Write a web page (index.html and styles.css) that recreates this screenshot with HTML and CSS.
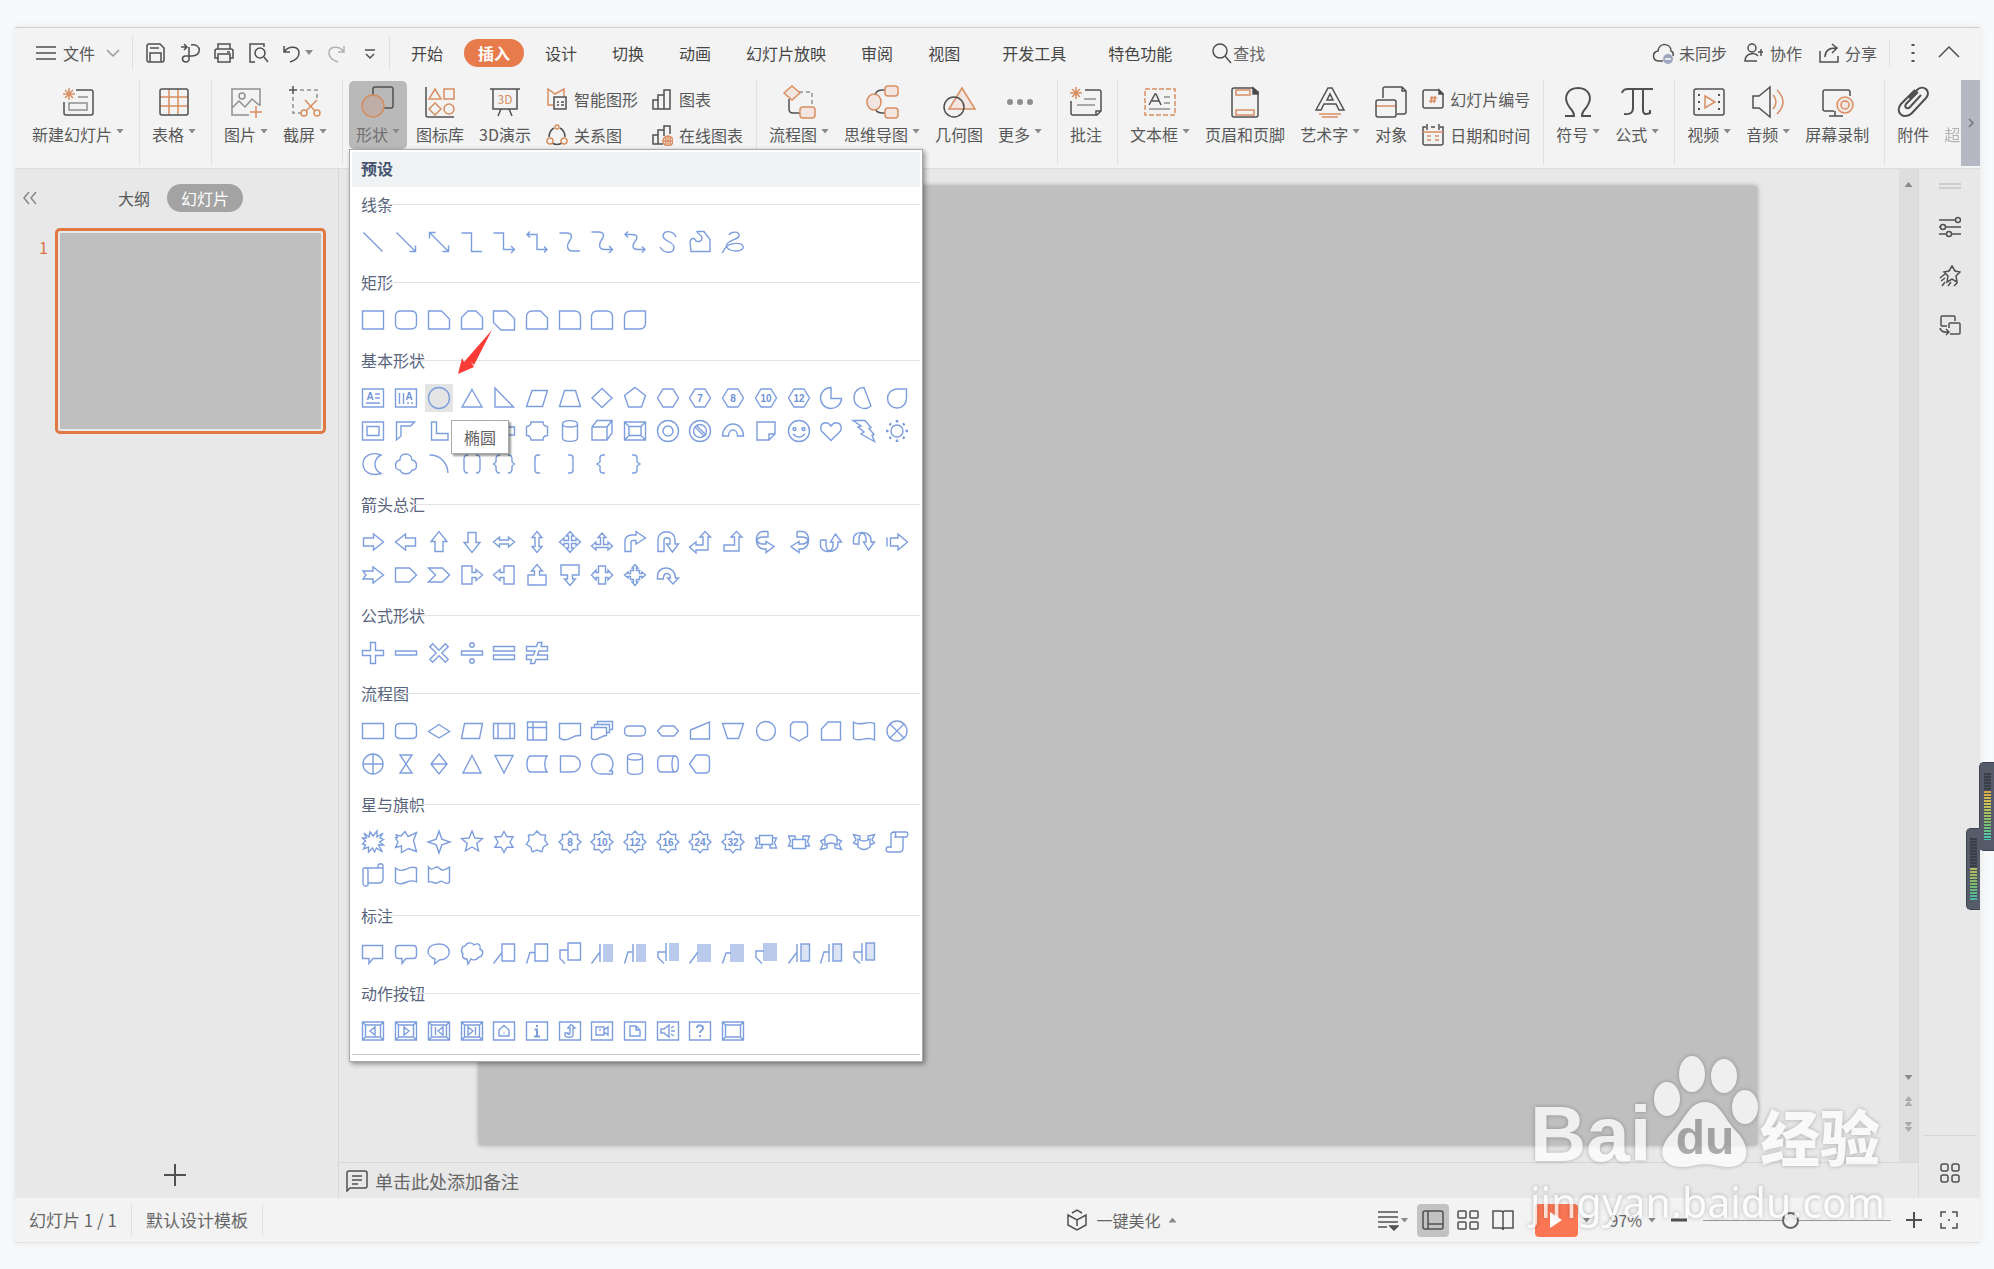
FILE: index.html
```html
<!DOCTYPE html>
<html lang="zh-CN">
<head>
<meta charset="utf-8">
<title>演示</title>
<link rel="stylesheet" href="styles.css">
</head>
<body>
<div class="app">
  <header class="menubar">
    <button class="file-btn"><svg class="i22" viewBox="0 0 22 22"><path d="M1 5h20M1 11h20M1 17h20"/></svg>文件<svg class="chev" viewBox="0 0 14 10"><path d="M1 2l6 6 6-6"/></svg></button>
    <div class="quick">
      <button aria-label="保存"><svg class="i22" viewBox="0 0 22 22"><path d="M2 4q0-2 2-2h11l4 4v12q0 2-2 2H4q-2 0-2-2zM5 20v-9h11v9M5 6h9"/></svg></button>
      <button aria-label="输出"><svg class="i22" viewBox="0 0 22 22"><path d="M2 5h5M5 2l3 3-3 3M12 3c11-2 11 12 0 11H6c-4 1-3 6 1 6s3-4 3-6V5"/></svg></button>
      <button aria-label="打印"><svg class="i22" viewBox="0 0 22 22"><path d="M5 7V2h12v5M5 16H2V9q0-2 2-2h14q2 0 2 2v7h-3M5 12h12v8H5zM14 10h3"/></svg></button>
      <button aria-label="预览"><svg class="i22" viewBox="0 0 22 22"><path d="M8 20H3V2h14v3"/><circle cx="13" cy="11" r="5"/><path d="M17 15l4 5"/></svg></button>
      <button aria-label="撤销" class="drop"><svg class="i22" viewBox="0 0 22 22"><path d="M3 4v6h6M3 10C8 3 18 4 18 11q0 6-9 9"/></svg><i class="caret"></i></button>
      <button aria-label="重做" class="dim"><svg class="i22" viewBox="0 0 22 22"><path d="M19 4v6h-6M19 10C14 3 4 4 4 11q0 6 9 9"/></svg></button>
      <button aria-label="更多"><svg class="i22" viewBox="0 0 22 22"><path d="M6 8h10M7 12l4 4 4-4"/></svg></button>
    </div>
    <nav class="tabs">
      <button>开始</button><button class="on">插入</button><button>设计</button><button>切换</button><button>动画</button><button>幻灯片放映</button><button>审阅</button><button>视图</button><button class="apart">开发工具</button><button class="apart">特色功能</button>
      <button class="find"><svg class="i22" viewBox="0 0 22 22"><circle cx="9" cy="9" r="7"/><path d="M14 14l6 7"/></svg>查找</button>
    </nav>
    <div class="account">
      <button><svg class="i22" viewBox="0 0 22 22"><path d="M11 19H6c-6-1-6-9 0-10 1-9 13-8 13 0q3 1 2 5"/><circle cx="16" cy="17" r="5" fill="#9ea6bd" stroke="none"/><path d="M13 17h6" stroke="#fff"/></svg>未同步</button>
      <button><svg class="i22" viewBox="0 0 22 22"><circle cx="9" cy="6" r="4"/><path d="M15 14c-3-4-13-3-13 5h12M15 10h5M18 7v7"/></svg>协作</button>
      <button><svg class="i22" viewBox="0 0 22 22"><path d="M2 9v11h18v-6M7 15c0-6 4-9 11-9M14 2l5 4-5 5"/></svg>分享</button>
    </div>
    <div class="winctl">
      <button aria-label="选项"><svg class="i22" viewBox="0 0 22 22"><path d="M11 2v2M11 10v2M11 18v2" stroke-width="3"/></svg></button>
      <button aria-label="收起"><svg class="i22" viewBox="0 0 22 22"><path d="M1 15l10-10 10 10"/></svg></button>
    </div>
  </header>

  <div class="ribbon">
    <div class="group first">
      <button class="tool"><svg class="i32" viewBox="0 0 32 32"><path d="M14 4h15q2 0 2 2v21q0 2-2 2H4q-2 0-2-2V16"/><path class="g" d="M16 11h10M7 17h18v7H7z"/><path class="o" d="M7 2v12M1 8h12M3 4l8 8M11 4l-8 8"/></svg><span>新建幻灯片<i class="caret"></i></span></button>
    </div>
    <div class="group">
      <button class="tool"><svg class="i32" viewBox="0 0 32 32"><path class="o" d="M2 11h28M2 20h28M11 3v26M20 3v26"/><rect x="2" y="3" width="28" height="26" rx="2"/></svg><span>表格<i class="caret"></i></span></button>
    </div>
    <div class="group">
      <button class="tool"><svg class="i32" viewBox="0 0 32 32"><path class="g" d="M19 29H2V3h28v17M2 22l7-7 6 6 7-8 7 6"/><circle class="g" cx="12" cy="10" r="3"/><path class="o" d="M26 20v12M20 26h12"/></svg><span>图片<i class="caret"></i></span></button>
      <button class="tool"><svg class="i32" viewBox="0 0 32 32"><path d="M4 0v8M0 4h8"/><path class="g" stroke-dasharray="4 3" d="M11 4h17v10M4 11v16h8"/><path class="o" d="M16 14l10 11M28 14L17 25"/><circle class="o" cx="15" cy="27" r="3"/><circle class="o" cx="28" cy="27" r="3"/></svg><span>截屏<i class="caret"></i></span></button>
    </div>
    <div class="group">
      <div class="menu-anchor">
        <button class="tool open" aria-expanded="true"><svg class="i32" viewBox="0 0 32 32"><rect x="11" y="1" width="20" height="21" rx="2"/><circle cx="11" cy="20" r="11" fill="#bfaea6" stroke="#d38c5f"/></svg><span>形状<i class="caret"></i></span></button>
        <div class="gallery">
          <h2>预设</h2>
          <div class="gallery-body"></div>
          <div class="gallery-end"></div>
          <div class="tip" role="tooltip">椭圆</div>
          <svg class="pointer" viewBox="0 0 36 46"><path d="M35 1L17 36l-3-3 3 5-16 7 4-16 2 4z" fill="#fb3b35" stroke="none"/></svg>
        </div>
      </div>
      <button class="tool"><svg class="i32" viewBox="0 0 32 32"><path d="M2 1v28q0 2 2 2h26"/><path class="o" d="M11 3l6 10H5zM20 3h10v10H20zM11 17l6 6-6 6-6-6z"/><circle class="o" cx="25" cy="23" r="5"/></svg><span>图标库</span></button>
      <button class="tool"><svg class="i32" viewBox="0 0 32 32"><path d="M1 3h30M4 3v20h24V3M12 23l-3 7M20 23l3 7"/><text class="ic" x="16" y="18" font-size="12">3D</text></svg><span>3D演示</span></button>
      <div class="stack">
        <button><svg class="i22" viewBox="0 0 22 22"><path class="o" d="M7 17H2V1l7 5 9-5v7"/><path d="M8 9h12v12H8zM11 14h2M15 14h3M11 17h2M15 17h3"/></svg>智能图形</button>
        <button><svg class="i22" viewBox="0 0 22 22"><path d="M8 4Q3 7 3 13M14 4q5 3 5 9M6 19q5 3 10 0"/><g class="o"><circle cx="11" cy="3" r="2"/><circle cx="4" cy="17" r="3"/><circle cx="18" cy="17" r="3"/></g></svg>关系图</button>
      </div>
      <div class="stack">
        <button><svg class="i22" viewBox="0 0 22 22"><path d="M2 12h5v9H2zM7 7h6v14H7zM13 2h6v19h-6z"/></svg>图表</button>
        <button><svg class="i22" viewBox="0 0 22 22"><path d="M12 20H2v-9h5v9M7 11V6h6v6M13 9V2h6v8"/><g class="o"><circle cx="17" cy="17" r="5"/><path d="M12 17h10M17 12v10M15 13q-1 4 0 8M19 13q1 4 0 8"/></g></svg>在线图表</button>
      </div>
    </div>
    <div class="group">
      <button class="tool"><svg class="i32" viewBox="0 0 32 32"><path d="M6 13v10q0 4 4 4h7"/><path class="g" stroke-dasharray="4 3" d="M16 6h13v14"/><path class="of" d="M9 0l8 7-8 7-8-7z"/><rect class="of" x="17" y="21" width="15" height="11" rx="3"/></svg><span>流程图<i class="caret"></i></span></button>
      <button class="tool"><svg class="i32" viewBox="0 0 32 32"><path d="M9 11q0-7 7-7h3M9 20q0 7 7 7h3"/><ellipse class="of" cx="8" cy="16" rx="7" ry="8"/><rect class="of" x="19" y="0" width="13" height="10" rx="3"/><rect class="of" x="19" y="22" width="13" height="10" rx="3"/></svg><span>思维导图<i class="caret"></i></span></button>
      <button class="tool"><svg class="i32" viewBox="0 0 32 32"><path class="of" d="M19 2l13 21H6z"/><circle cx="11" cy="21" r="10"/></svg><span>几何图</span></button>
      <button class="tool"><svg class="i32 dots" viewBox="0 0 32 32"><circle cx="6" cy="16" r="3"/><circle cx="16" cy="16" r="3"/><circle cx="26" cy="16" r="3"/></svg><span>更多<i class="caret"></i></span></button>
    </div>
    <div class="group">
      <button class="tool"><svg class="i32" viewBox="0 0 32 32"><path d="M15 4h14q2 0 2 2v19l-4 4H3q-2 0-2-2V15M26 29v-4h5"/><path class="g" d="M14 13h12M7 19h18"/><path class="o" d="M6 1v12M0 7h12M2 3l8 8M10 3l-8 8"/></svg><span>批注</span></button>
    </div>
    <div class="group">
      <button class="tool"><svg class="i32" viewBox="0 0 32 32"><rect class="o" x="1" y="3" width="30" height="26" stroke-dasharray="5 2"/><path d="M5 19l6-11h1l5 11M8 15h7"/><path class="g" d="M20 11h6M20 17h6M5 23h21"/></svg><span>文本框<i class="caret"></i></span></button>
      <button class="tool"><svg class="i32" viewBox="0 0 32 32"><path d="M24 2H5q-2 0-2 2v25q0 2 2 2h22q2 0 2-2V6z"/><path d="M24 2l5 4v2h-5z" fill="#444"/><path class="o" d="M7 4h14v5H7zM7 24h18v5H7z"/></svg><span>页眉和页脚</span></button>
      <button class="tool"><svg class="i32" viewBox="0 0 32 32"><path d="M2 24L14 2h4l12 22h-5l-3-6H10l-3 6zM13 14h6l-3-6z"/><path class="o" d="M5 28h22M8 31h16"/></svg><span>艺术字<i class="caret"></i></span></button>
      <button class="tool"><svg class="i32" viewBox="0 0 32 32"><path d="M8 12V3q0-2 2-2h17l4 4v21q0 2-2 2h-7M27 1v4h4"/><path class="o" d="M1 20h20"/><rect x="1" y="14" width="20" height="17" rx="2"/></svg><span>对象</span></button>
      <div class="stack">
        <button><svg class="i22" viewBox="0 0 22 22"><path d="M17 2H3q-2 0-2 2v14q0 2 2 2h16q2 0 2-2V6z"/><path d="M17 2l4 4h-4z" fill="#444"/><path class="o" d="M10 8l-1 7M13 8l-1 7M8 10h7M7 13h7"/></svg>幻灯片编号</button>
        <button><svg class="i22" viewBox="0 0 22 22"><path d="M4 3H1v16q0 2 2 2h16q2 0 2-2V3h-3M9 3h4M5 0v6M17 0v6"/><path class="o" d="M1 8h20M5 12h4M13 12h4M5 16h4M13 16h4"/></svg>日期和时间</button>
      </div>
    </div>
    <div class="group">
      <button class="tool"><svg class="i32" viewBox="0 0 32 32"><path stroke-width="2" d="M3 30h9q0-4-4-8C-1 10 7 2 16 2s17 8 8 20q-4 4-4 8h9"/></svg><span>符号<i class="caret"></i></span></button>
      <button class="tool"><svg class="i32" viewBox="0 0 32 32"><path stroke-width="2" d="M1 7q1-4 6-4h25M12 4v18q0 7-9 6M22 4v20q0 6 7 3v-3"/></svg><span>公式<i class="caret"></i></span></button>
    </div>
    <div class="group">
      <button class="tool"><svg class="i32" viewBox="0 0 32 32"><rect x="1" y="3" width="30" height="26" rx="2"/><path class="o" d="M12 10l10 6-10 6z"/><path d="M5 9h2M5 16h2M5 23h2M25 9h2M25 16h2M25 23h2" stroke-width="2"/></svg><span>视频<i class="caret"></i></span></button>
      <button class="tool"><svg class="i32" viewBox="0 0 32 32"><path d="M1 10h6l11-9v30L7 22H1z"/><path class="o" d="M21 9q6 7 0 14M25 4q12 12 0 24"/></svg><span>音频<i class="caret"></i></span></button>
      <button class="tool"><svg class="i32" viewBox="0 0 32 32"><path d="M13 25H4q-2 0-2-2V6q0-2 2-2h23q2 0 2 2v4M8 30h14M14 25v5"/><circle class="of" cx="24" cy="19" r="8"/><circle class="o" cx="24" cy="19" r="4"/></svg><span>屏幕录制</span></button>
    </div>
    <div class="group last">
      <button class="tool"><svg class="i32" viewBox="0 0 32 32"><path d="M12 12L20 4C26-2 35 5 29 12L15 27C7 35-3 26 4 18L18 4M24 9L13 21c-3 3-6 0-4-3L21 6" stroke-width="2"/></svg><span>附件</span></button>
      <button class="tool dim"><svg class="i32" viewBox="0 0 32 32"><path d="M14 2q-5 3 0 6"/></svg><span>超链接</span></button>
    </div>
    <button class="ribbon-next" aria-label="向右滚动"><svg viewBox="0 0 8 12"><path d="M2 2l4 4-4 4"/></svg></button>
  </div>

  <main class="work">
    <aside class="outline">
      <div class="outline-tabs">
        <button aria-label="收起窗格"><svg class="i14" viewBox="0 0 14 14"><path d="M6 1L1 7l5 6M13 1L8 7l5 6"/></svg></button>
        <button class="t1">大纲</button><button class="t2">幻灯片</button>
      </div>
      <div class="thumb-row"><span>1</span><button class="thumb" aria-label="幻灯片 1"><i></i></button></div>
      <button class="add" aria-label="新建幻灯片"><svg class="i22" viewBox="0 0 22 22"><path d="M11 0v22M0 11h22" stroke-width="2"/></svg></button>
    </aside>
    <section class="center">
      <div class="stage">
        <div class="canvas"><div class="slide"></div></div>
        <div class="vscroll"><i class="up"></i><i class="down lead"></i><span class="faint"><i class="up"></i><i class="up"></i></span><span class="faint"><i class="down"></i><i class="down"></i></span></div>
      </div>
      <div class="notes"><svg class="i22" viewBox="0 0 22 22"><path d="M1 21V3q0-2 2-2h16q2 0 2 2v13q0 2-2 2H4zM6 6h10M6 10h10M6 14h6"/></svg>单击此处添加备注</div>
    </section>
    <aside class="side">
      <svg class="grip" viewBox="0 0 22 6"><path d="M0 1h22M0 5h22"/></svg>
      <button aria-label="属性"><svg class="i22" viewBox="0 0 22 22"><path d="M0 4h16M0 11h2M7 11h15M0 18h7M13 18h9"/><circle cx="19" cy="4" r="2.500"/><circle cx="4" cy="11" r="2.500"/><circle cx="10" cy="18" r="2.500"/></svg></button>
      <button aria-label="动画"><svg class="i22" viewBox="0 0 22 22"><path d="M13 1l3 5 5 1-4 4 1 6-5-3-5 3 1-6-4-4 5-1zM6 9l-5 4M6 13l-4 3M6 17l-3 4M12 17l-3 4M18 18l-3 3"/></svg></button>
      <button aria-label="切换"><svg class="i22" viewBox="0 0 22 22"><path d="M8 12H3q-1 0-1-1V3q0-1 1-1h12q1 0 1 1v4M11 20h9q1 0 1-1V10q0-1-1-1h-9q-1 0-1 1v4M1 14q1 5 9 4M7 15l3 3-3 3"/></svg></button>
      <button class="apps" aria-label="更多面板"><svg class="i22" viewBox="0 0 22 22"><rect x="2" y="2" width="7" height="7" rx="2"/><rect x="13" y="2" width="7" height="7" rx="2"/><rect x="2" y="13" width="7" height="7" rx="2"/><rect x="13" y="13" width="7" height="7" rx="2"/></svg></button>
    </aside>
  </main>

  <footer class="status">
    <span class="cell">幻灯片 1 / 1</span><span class="cell">默认设计模板</span>
    <button class="beauty"><svg class="i22" viewBox="0 0 22 22"><path d="M6 4l5-3 5 3M2 6l9 5 9-5v10l-9 5-9-5zM11 11v6"/></svg>一键美化<i class="up"></i></button>
    <div class="views">
      <button class="drop" aria-label="备注"><svg class="i22" viewBox="0 0 22 22"><path d="M1 3h20M1 8h20M1 13h20M1 18h9"/><path d="M13 17h8l-4 4z" fill="#555"/></svg><i class="caret"></i></button>
      <button class="view on" aria-label="普通视图"><svg class="i22" viewBox="0 0 22 22"><rect x="1" y="2" width="20" height="18" rx="2"/><path d="M6 2v18M6 15h15"/></svg></button>
      <button class="view" aria-label="浏览视图"><svg class="i22" viewBox="0 0 22 22"><rect x="1" y="2" width="8" height="7" rx="1"/><rect x="13" y="2" width="8" height="7" rx="1"/><rect x="1" y="13" width="8" height="7" rx="1"/><rect x="13" y="13" width="8" height="7" rx="1"/></svg></button>
      <button class="view" aria-label="阅读视图"><svg class="i22" viewBox="0 0 22 22"><path d="M11 4v17M11 4q0-2-2-2H1v17h8q2 0 2 2 0-2 2-2h8V2h-8q-2 0-2 2"/></svg></button>
      <button class="play" aria-label="放映"><svg viewBox="0 0 14 18"><path d="M1 1l12 8-12 8z"/></svg></button>
      <i class="caret"></i>
      <button class="pct">97%<i class="caret"></i></button>
      <button class="minus" aria-label="缩小"><svg class="i18" viewBox="0 0 18 18"><path d="M1 9h16" stroke-width="3"/></svg></button>
      <input type="range" min="10" max="184" value="90" aria-label="缩放">
      <button aria-label="放大"><svg class="i18" viewBox="0 0 18 18"><path d="M9 1v16M1 9h16" stroke-width="2"/></svg></button>
      <button class="fit" aria-label="适应窗口"><svg class="i18" viewBox="0 0 18 18"><path d="M6 1H1v5M12 1h5v5M6 17H1v-5M12 17h5v-5M8 9h2" /></svg></button>
    </div>
  </footer>

  <div class="meter outer"><i></i></div>
  <div class="meter inner"><i></i></div>
  <div class="mark">
    <div class="mark-top"><b>Bai</b><svg viewBox="0 0 106 114"><g fill="#fff" stroke="none"><ellipse cx="14" cy="44" rx="13" ry="17"/><ellipse cx="39" cy="19" rx="13" ry="18"/><ellipse cx="71" cy="21" rx="13" ry="17"/><ellipse cx="92" cy="52" rx="13" ry="17"/><path d="M52 47c15 0 19 17 31 29 15 15 15 36-8 36-8 0-14-3-23-3s-14 3-22 3C7 112 3 94 19 78c13-13 17-31 33-31z"/></g><text x="52" y="99" font-size="48" text-anchor="middle">du</text></svg><b class="cn">经验</b></div>
    <div class="mark-url">jingyan.baidu.com</div>
  </div>
</div>
<script src="shapes.js"></script>
</body>
</html>
```
FILE: styles.css
```css
* { box-sizing: border-box; }
body { margin: 0; background: #f7f9fb; color: #585858; font: 16px/24px "Noto Sans CJK SC", "Noto Sans", sans-serif; overflow-x: hidden; }
button { border: 0; padding: 0; margin: 0; background: none; color: inherit; font: inherit; white-space: nowrap; flex: none; }
svg { display: block; flex: none; fill: none; stroke: #505050; stroke-width: 1.5; }
.i32 { width: 32px; height: 32px; overflow: visible; }
.i22 { width: 22px; height: 22px; }
.i18 { width: 18px; height: 18px; }
.i14 { width: 14px; height: 14px; }
.o { stroke: #d98e62; }
.of { stroke: #d98e62; fill: #f3e6e0; }
.g { stroke: #909090; }
.ic { fill: #d98e62; stroke: none; text-anchor: middle; }
.dots { fill: #8f8f8f; stroke: none; }
.dim { opacity: .4; }
.caret, .up, .down { display: inline-block; flex: none; width: 8px; height: 5px; background: #8a8a8a; clip-path: polygon(0 0, 100% 0, 50% 100%); }
.up { clip-path: polygon(50% 0, 100% 100%, 0 100%); }

.app { position: relative; display: flex; flex-direction: column; min-height: calc(100vh - 53px); margin: 27px 14px 26px 15px; background: #f3f3f3; border-top: 1px solid #cdcfd2; box-shadow: 0 0 8px rgba(0, 0, 0, .08); }

.menubar { display: flex; align-items: center; height: 51px; padding: 0 20px 2px 20px; }
.file-btn { display: flex; align-items: center; gap: 6px; height: 34px; padding-right: 12px; border-right: 1px solid #e0e0e0; }
.chev { width: 14px; height: 10px; margin-left: 5px; stroke: #999; }
.quick { display: flex; align-items: center; gap: 12px; height: 34px; padding: 0 8px 0 12px; border-right: 1px solid #e0e0e0; }
.drop { display: flex; align-items: center; gap: 2px; }
.tabs { display: flex; align-items: center; gap: 35px; margin-left: 21px; color: #454545; }
.tabs .on { margin: 0 -14px; padding: 2px 14px; border-radius: 14px; background: #e87b4b; color: #fff; font-weight: 700; }
.tabs .apart { margin-left: 7px; }
.find { display: flex; align-items: center; margin-left: 4px; color: #666; }
.account { display: flex; align-items: center; gap: 16px; height: 28px; margin-left: auto; padding-right: 12px; border-right: 1px solid #e0e0e0; }
.account button { display: flex; align-items: center; gap: 5px; }
.winctl { display: flex; gap: 14px; margin-left: 12px; }

.ribbon { display: flex; height: 90px; padding-bottom: 3px; border-bottom: 1px solid #dcdcdc; }
.group { display: flex; align-items: flex-start; flex: none; gap: 3px; height: 86px; padding: 2px 9px 0 6px; border-right: 1px solid #e2e2e2; }
.group.first { padding-left: 11px; }
.group.last { flex: 1; min-width: 0; overflow: hidden; border: 0; padding-right: 0; }
.tool { display: flex; flex-direction: column; align-items: center; gap: 4px; height: 68px; padding: 5px 6px 3px; border-radius: 5px; }
.tool span { display: flex; align-items: center; gap: 4px; }
.tool .caret { margin-bottom: 6px; }
.tool.open { padding-left: 7px; padding-right: 7px; background: #b9b9b9; color: #707070; }
.stack { display: flex; flex-direction: column; gap: 12px; padding: 6px 4px 0 6px; }
.stack button { display: flex; align-items: center; gap: 6px; }
.ribbon-next { display: flex; align-items: center; justify-content: center; width: 19px; height: 86px; margin-top: 1px; background: #b5b8c2; }
.ribbon-next svg { width: 8px; height: 12px; stroke: #777; }

.menu-anchor { position: relative; }
.gallery { position: absolute; z-index: 5; top: 100%; left: 0; width: 574px; padding: 2px; background: #fff; border: 1px solid #a9a9a9; box-shadow: 2px 2px 5px rgba(0, 0, 0, .4); color: #58647e; }
.gallery h2 { margin: 0; padding: 4px 9px 7px; background: #f0f2f4; font-size: 16px; line-height: 24px; font-weight: 700; color: #44546f; }
.gallery h3 { display: flex; align-items: center; margin: 0; padding-left: 9px; font-size: 16px; line-height: 34px; font-weight: 400; }
.gallery h3::after { content: ""; flex: 1; height: 1px; margin-left: -12px; background: #e2e2e2; }
.shapes { display: grid; grid-template-columns: repeat(17, 1fr); grid-auto-rows: 33px; margin: 4px 7px 7px 5px; place-items: center; }
.shapes button { padding: 2px; }
.shapes button.hot { background: #e4e4e4; }
.shapes svg { width: 24px; height: 24px; stroke: #7d9edd; stroke-width: 1.4; overflow: visible; }
.shapes text { fill: #7093d8; stroke: none; font: 700 10px "Liberation Sans", sans-serif; text-anchor: middle; }
.shapes .solid { fill: #b9caec; stroke: none; }
.shapes .tint { fill: #dbe4f5; }
.gallery-end { height: 5px; border-top: 1px solid #ccc; }
.tip { position: absolute; top: 270px; left: 101px; padding: 4px 12px; background: rgba(255, 255, 255, .96); border: 1px solid #aaa; box-shadow: 2px 2px 2px rgba(0, 0, 0, .4); color: #606060; }
.pointer { position: absolute; top: 179px; left: 107px; width: 36px; height: 46px; }

.work { display: flex; flex: 1; background: #e8e8e8; }
.outline { display: flex; flex-direction: column; width: 324px; border-right: 1px solid #d8d8d8; }
.outline-tabs { display: flex; align-items: center; gap: 17px; padding: 15px 8px 0; }
.outline-tabs svg { stroke: #888; }
.t1 { margin-left: 64px; }
.t2 { padding: 2px 14px; border-radius: 14px; background: #a3a3a3; color: #fff; }
.thumb-row { display: flex; gap: 8px; padding: 16px 12px 0 24px; color: #e07040; }
.thumb-row span { width: 8px; padding-top: 7px; }
.thumb { flex: 1; height: 206px; padding: 2px; border: 3px solid #e07844; border-radius: 5px; background: #e8e8e8; }
.thumb i { display: block; height: 100%; background: #bfbfbf; }
.add { align-self: center; margin: auto 0 12px; padding-right: 4px; }
.center { display: flex; flex-direction: column; flex: 1; min-width: 0; }
.stage { display: flex; flex: 1; }
.canvas { display: flex; flex: 1; padding: 17px 142px 17px 140px; }
.slide { flex: 1; background: #bfbfbf; box-shadow: 0 0 5px rgba(0, 0, 0, .35); }
.vscroll { display: flex; flex-direction: column; align-items: center; gap: 16px; width: 19px; padding: 13px 0 30px; background: #dedede; }
.vscroll .lead { margin-top: auto; }
.faint { display: flex; flex-direction: column; opacity: .6; }
.notes { display: flex; align-items: center; gap: 7px; height: 36px; padding-left: 7px; border-top: 1px solid #d6d6d6; font-size: 18px; color: #666; }
.side { display: flex; flex-direction: column; align-items: center; gap: 27px; width: 62px; padding-top: 14px; border-left: 1px solid #dadada; }
.grip { width: 22px; height: 6px; stroke: #c4c4c4; }
.apps { align-self: stretch; display: flex; justify-content: center; margin: auto 4px 0; padding: 26px 0 14px; border-top: 1px solid #d6d6d6; }

.status { display: flex; align-items: center; height: 45px; border-bottom: 1px solid #e0e2e4; color: #666; }
.cell { height: 32px; padding: 4px 14px 0; border-right: 1px solid #e0e0e0; font-size: 17px; }
.beauty { display: flex; align-items: center; gap: 8px; margin-left: auto; }
.views { display: flex; align-items: center; margin-left: 200px; padding-right: 22px; }
.view { display: flex; align-items: center; height: 33px; padding: 0 5px; margin-left: 3px; border-radius: 4px; }
.view.on { margin-left: 8px; background: #c2c2c2; }
.play { display: flex; align-items: center; justify-content: center; width: 43px; height: 33px; margin: 0 5px 0 16px; border-radius: 4px; background: #fb7754; }
.play svg { width: 14px; height: 18px; fill: #fff; stroke: none; }
.pct { display: flex; align-items: center; gap: 6px; margin: 0 14px 0 19px; }
.views input { width: 188px; height: 20px; margin: 0 14px 0 15px; appearance: none; background: linear-gradient(#999, #999) center / 100% 1px no-repeat; }
.views input::-webkit-slider-thumb { appearance: none; width: 17px; height: 17px; border: 2px solid #666; border-radius: 50%; background: #f3f3f3; }
.fit { margin-left: 17px; }

.meter { position: absolute; display: flex; justify-content: center; background: #555b69; border: 1px solid #3e4350; border-right: 0; border-radius: 5px 0 0 5px; }
.meter i { width: 7px; background: repeating-linear-gradient(transparent 0 2px, #4b505d 2px 3px), linear-gradient(#3a3e49 27%, #d8a548 27%, #cfc255 45%, #7dbb6c 75%, #45c9b8); }
.meter.outer { top: 734px; right: -14px; width: 15px; height: 89px; padding: 10px 0; }
.meter.inner { top: 800px; right: 0; width: 14px; height: 82px; padding: 9px 0; }
.meter.inner i { background: repeating-linear-gradient(transparent 0 2px, #4b505d 2px 3px), linear-gradient(#3a3e49 47%, #bdbd5b 47%, #7dbb6c 75%, #45b9a8); }

.mark { position: absolute; right: 92px; bottom: 14px; width: 358px; color: #fff; opacity: .75; pointer-events: none; filter: drop-shadow(0 0 2px rgba(0, 0, 0, .35)); }
.mark-top { display: flex; align-items: flex-end; justify-content: space-between; padding-right: 8px; font: 700 78px/1 "Liberation Sans", sans-serif; }
.mark-top svg { width: 106px; height: 114px; }
.mark-top svg text { fill: #999; stroke: none; }
.mark-top b { line-height: 70px; }
.mark-top .cn { font: 900 60px/68px "Noto Sans CJK SC", sans-serif; }
.mark-url { margin-top: 6px; font: 41px/54px "Noto Sans", sans-serif; }
```
FILE: shapes.js
```js
// Each shape is drawn in a 24 x 24 box: a path string, or SVG markup when it needs more than one path.
const p = (d, extra = '') => `<path d="${d}" ${extra}/>`;
const turn = (d, deg) => p(d, `transform="rotate(${deg} 12 12)"`);
const flip = d => p(d, 'transform="translate(24 0) scale(-1 1)"');
const num = (d, t) => p(d) + `<text x="12" y="15.500">${t}</text>`;
const c = (r, x = 12, y = 12) => `<circle cx="${x}" cy="${y}" r="${r}"/>`;
const star = (n, R, r, off = 0) => {
  let d = '';
  for (let i = 0; i < n * 2; i++) {
    const a = Math.PI * i / n - Math.PI / 2 + off, q = i % 2 ? r : R;
    d += (i ? 'L' : 'M') + (12 + q * Math.cos(a)).toFixed(1) + ' ' + (12 + q * Math.sin(a)).toFixed(1);
  }
  return d + 'z';
};
const hex = 'M7 3h10l5.500 9-5.500 9H7l-5.500-9z';
const seal = star(8, 11, 8);
const right = 'M2.500 8h10V4l10 8-10 8v-4h-10z';
const both = 'M1.500 12l6-5v3h9V7l6 5-6 5v-3h-9v3z';
const curved = 'M14 1.500H9C0 1.500 0 19 10 19h2v3.500l8-6-8-5V14H9C5 14 3 11 2.500 9M14 1.500v5.500H9C6 7 4 8 3 10';
const box = 'M2 3h10v6.500h4v-3l6.500 5.500-6.500 5.500v-3h-4V21H2z';
const frame = 'M1.500 3h21v18h-21z';
const bevel = frame + 'M4.500 6h15v12h-15zM1.500 3l3 3M22.500 3l-3 3M1.500 21l3-3M22.500 21l-3-3';
const round = 'M7 3h10q5.500 0 5.500 5v8q0 5-5.500 5H7q-5.500 0-5.500-5V8q0-5 5.500-5z';
const banner = 'M5.500 5.500h13v9h-13zM5.500 8h-4l2 4.500-2 5.500H8v-3.500M18.500 8h4l-2 4.500 2 5.500H16v-3.500';
const bannerArc = 'M6 7q6-5 12 0v8q-6-4-12 0zM6 9l-4.500 2 2.500 3-2.500 5.500L8 18v-4M18 9l4.500 2-2.500 3 2.500 5.500L16 18v-4';
const solid = (x, y, w, h) => `<rect class="solid" x="${x}" y="${y}" width="${w}" height="${h}"/>`;
const tint = (x, y, w, h) => `<rect class="tint" x="${x}" y="${y}" width="${w}" height="${h}"/>`;

const sections = [
  ['线条', [
    'M2.500 2.500l19 19', 'M2.500 2.500l19 19M21.500 15.500v6h-6', 'M2.500 2.500l19 19M21.500 15.500v6h-6M2.500 8.500v-6h6',
    'M1.500 3h10v18.500H22', 'M1.500 3h10v16.500h11M19 16l3.500 3.500L19 23', 'M2 4.500h10v15h10M5 1.500l-3 3 3 3M19 16.500l3 3-3 3',
    'M1.500 3h7c6 0 6 4 3 8s-3 10 3 10h7.500', 'M1.500 2h7c6 0 6 4 3 8s-3 9.500 3 9.500h8M19 16l3.500 3.500L19 23',
    'M2 4.500h7c6 0 6 3 3 7s-3 8 3 8h7M5 1.500l-3 3 3 3M19 16.500l3 3-3 3',
    'M20 7C17 0 7 0 7 6c0 5 11 6 11 11 0 7-10 7-14 0', 'M3 21.500h19V9.500l-6-8H9c0 3 5 3 5 6 0 5-6 5-7 2-1-2-5-1-5 3z',
    'M8 5c2-4 11-4 10 1-1 4-9 3-12 8-2 4 3 7 9 7s8-3 7-5c-2-4-12-3-16 0-2 2-4 5-4.500 7']],
  ['矩形', [
    frame, round, 'M1.500 3h13l8 8v10h-21z', 'M8 3h8l6.500 6.500V21h-21V9.500z', 'M1.500 3h13l8 7.500V22H9l-7.500-7.500z',
    'M1.500 21V9q0-6 6-6h8l7 7v11z', 'M1.500 3h15q6 0 6 6v12h-21z', 'M1.500 21V9q0-6 6-6h9q6 0 6 6v12z', 'M7.500 3h15v12q0 6-6 6h-15V9q0-6 6-6z']],
  ['基本形状', [
    p(frame + 'M14 8h5M14 12h5M5 17h14') + '<text x="9" y="14">A</text>', p(frame + 'M5.500 7v11M9.500 7v11M13 17h2M17 17h2') + '<text x="15" y="14">A</text>', c(10.5),
    'M12 3.500L22 21H2z', 'M3 2v19h18.500z', 'M7 4.500h15.500l-5 16h-16z', 'M6.500 4.500h11l5 16h-21z', 'M12 2.500l10 9.500-10 9.500L2 12z', 'M12 1.500l10.500 8-4 11.500h-13L1.500 9.500z',
    hex, num(hex, '7'), num(hex, '8'), num(hex, '10'), num(hex, '12'), 'M12 1.500v11h10.500A10.500 10.500 0 1 1 12 1.500z', 'M12 1.500l7 18.500c-7 6-17 0-17-8C2 5 7 1.500 12 1.500z', 'M21.500 3v9a9.500 9.500 0 1 1-9.500-9z',
    frame + 'M6 7.500h12v9H6z', 'M2.500 3h18l-4 4H7v10l-4.500 4z', 'M4.500 3h5v11.500H21V21H4.500z', 'M2 13L13 3h9L2 21z', 'M8 3h8v5h6.500v8H16v5H8v-5H1.500V8H8z',
    'M6 3h12q0 4.500 4.500 4.500v9Q18 16.500 18 21H6q0-4.500-4.500-4.500v-9Q6 7.500 6 3z', 'M4.500 5v14c0 4.500 15 4.500 15 0V5c0-4.500-15-4.500-15 0zc0 4 15 4 15 0',
    'M2 8l5-6.500h15V14l-5 7H2zM2 8h15v13M17 8l5-6.500', frame + 'M6 7.500h12v9H6zM1.500 3L6 7.500M22.500 3L18 7.500M1.500 21L6 16.500M22.500 21L18 16.500', c(10.5) + c(5), c(10.5) + c(6.5) + p('M7 8l9.500 9.500M8.500 6.500L18 16'),
    'M1.500 17a10.500 12 0 0 1 21 0h-6c0-8-9-8-9 0z', 'M3 3h18v12l-6 6H3zM15 21v-6h6', c(10.5) + c(1.5, 7.5, 10) + c(1.5, 16.5, 10) + p('M6 15q6 6 12 0'),
    'M12 21.500L2.500 12C-1 4 8 1 12 7c4-6 13-3 9.500 5z', 'M1 1.500h12l6 7-2 1 5 6-2 1 2.500 6L9 15l3-2-6-5 3-1z',
    c(6) + p('M12 1v2.500M12 20.500V23M1 12h2.500M20.500 12H23M4.500 4.500L6 6M18 18l1.500 1.500M4.500 19.500L6 18M18 6l1.500-1.500', 'stroke-width="2.500"'),
    'M20 3C9-1 2 5 2 12s7 13 18 9.500c-8-4-8-14.500 0-18.500z', 'M6 8c-1-8 12-8 12 0 6 1 6 10 0 10-2 5-10 5-12 0-6 0-6-9 0-10z', 'M2.500 3c11 0 18 8 18.500 18',
    'M8 3q-4 0-4 4v10q0 4 4 4M16 3q4 0 4 4v10q0 4-4 4', 'M8 3q-4 0-4 4v3l-2.500 2L4 14v3q0 4 4 4M16 3q4 0 4 4v3l2.500 2-2.500 2v3q0 4-4 4',
    'M15 3h-2q-3 0-3 3v12q0 3 3 3h2', 'M10 3h2q3 0 3 3v12q0 3-3 3h-2', 'M15 3h-2q-3 0-3 3v4l-3 2 3 2v4q0 3 3 3h2', 'M9 3h2q3 0 3 3v4l3 2-3 2v4q0 3-3 3H9']],
  ['箭头总汇', [
    right, flip(right), turn(right, 270), turn(right, 90), both, turn(both, 90),
    'M12 1.500L16 6h-2.500v4.500H18V8l4.500 4-4.500 4v-2.500h-4.500V18H16l-4 4.500L8 18h2.500v-4.500H6V16l-4.500-4L6 8v2.500h4.500V6H8z',
    'M12 3l4 4.500h-2.500v7H18v-2.500l4.500 4-4.500 4v-2.500H6V20l-4.500-4L6 12v2.500h4.500v-7H8z', 'M2 21.500V12q0-7 7-7h4V1.500L22.500 8 13 14v-3.500h-3q-2 0-2 2v9z',
    'M2 21.500V10c0-11 17-11 17 0v4h3.500l-6 8-6-8H14v-4c0-3-6-3-6 0v11.500z', 'M1.500 17L8 12v3h7V7h-3l5-5.500L22.500 7H20v13H8v3z', 'M3 15h10.500V7H10l5.500-5.500L21 7h-3v14H3z',
    curved, flip(curved), p(curved, 'transform="rotate(-90 12 12)"'), p(curved, 'transform="rotate(90 12 12) translate(0 24) scale(1 -1)"'), 'M2 7.500v9M5.500 8H13V4l9.500 8-9.500 8v-4H5.500z',
    'M2 8h10V4l10.500 8L12 20v-4H2l3-4z', 'M1.500 5h14l7 7-7 7h-14z', 'M1.500 5h14l7 7-7 7h-14l7-7z', box, flip(box), turn(box, 270), turn(box, 90),
    'M8.500 3h7v6.500H18V7l4.500 5-4.500 5v-2.500h-2.500V21h-7v-6.500H6V17l-4.500-5L6 7v2.500h2.500z',
    'M12 1.500L15 5h-1.500v2.500h3v3H19V9l3.500 3-3.500 3v-1.500h-2.500v3h-3V19H15l-3 3.500L9 19h1.500v-2.500h-3v-3H5V15l-3.500-3L5 9v1.500h2.500v-3h3V5H9z', 'M1.500 16V13c0-11 18-11 18 2h3L17 21l-5.500-6h3c0-6-7-6-7 0v1z']],
  ['公式形状', [
    'M9.500 1.500h5v8h8v5h-8v8h-5v-8h-8v-5h8z', 'M1.500 10h21v4h-21z', turn('M10 1h4v9h9v4h-9v9h-4v-9H1v-4h9z', 45), c(2.2, 12, 4) + p('M1.500 10h21v4h-21z') + c(2.2, 12, 20),
    'M1.500 5.500h21v4.500h-21zM1.500 14h21v4.500h-21z', 'M1.500 5.500h10L13 1.500h4l-1 4h6.500V10H14l-1.500 4h10v4.500H11L9.500 22.500h-4l1-4h-5V14h7L10 10H1.500z']],
  ['流程图', [
    'M1.500 4.500h21v15h-21z', 'M6 4.500h12q4.500 0 4.500 4v7q0 4-4.500 4H6q-4.500 0-4.500-4v-7q0-4 4.500-4z', 'M12 5.500l10.500 7L12 19l-10.500-6.500z', 'M4.500 4.500h18l-3 15h-18z', 'M1.500 4.500h21v15h-21zM6 4.500v15M18 4.500v15',
    'M2.500 3h19v18h-19zM8 3v18M2.500 8.500h19', 'M1.500 4.500h21v12c-9-1-10 6-18 4l-3-1.500z', 'M1.500 8.500h15v8c-6 0-7 5-13 4l-2-1zM4.500 8.500v-3h15v8h-3M7.500 5.500v-3h15v8h-3', 'M6 7h12q4.500 0 4.500 5T18 17H6q-4.500 0-4.500-5T6 7z', 'M6 7h12l4.500 5-4.500 5H6l-4.500-5z',
    'M2.500 11l19-8v17h-19z', 'M1.500 4.500h21l-5 15h-11z', c(9.5), 'M6 3h12l2.500 3v11L12 22l-8.500-5V6z', 'M9 3h12.500v18h-19V10z', 'M1.500 3c7 5 13-2 21 1.500V21c-8-5-14 3-21-1.500z', c(10) + p('M5 5l14 14M19 5L5 19'),
    c(10) + p('M12 2v20M2 12h20'), 'M6 3h12L6 21h12z', 'M12 2l8 10-8 10-8-10zM4 12h16', 'M12 3.500L21 21H3z', 'M3 3.500h18L12 21z', 'M5 4h17c-3 4-3 12 0 16H5c-4-2-4-14 0-16z',
    'M2.500 4H14c11 0 11 16 0 16H2.500z', 'M12 2c12 0 13 12 8 17h2.500v3H12C-2 22-2 2 12 2z', 'M4.500 5v14c0 4.500 15 4.500 15 0V5c0-4.500-15-4.500-15 0zc0 4 15 4 15 0', 'M5 4h14c4.500 0 4.500 16 0 16H5c-4.500 0-4.500-16 0-16zM19 4c-4 0-4 16 0 16', 'M8 3h9q4.500 0 4.500 4v10q0 4-4.500 4H8l-6.500-9z']],
  ['星与旗帜', [
    'M3 3l5 4 1-5 3 4 4-5v6l6-4-3 5 3.500 1.500-4 2.500 4 3h-5l4 7-6-4-2 4-2-4-4 4v-5l-5 2 2-4-3-1 3-3-3-3h4z', 'M2 5l5 1 4-4.500 3 5 8.500-4-3 8 3 11-8-3-7 4V16l-6 1.500L4 12 1.500 8l2-.500z', star(4, 11, 4), star(5, 11, 5), star(6, 10.5, 6), star(7, 11, 8),
    num(seal, '8'), num(seal, '10'), num(seal, '12'), num(seal, '16'), num(seal, '24'), num(seal, '32'),
    banner, turn(banner, 180), bannerArc, turn(bannerArc, 180), 'M6 18V5q0-3 3-3h12c3 0 2 5 0 5h-3v11q0 4-4 4H3c-3 0-2-5 0-5h3M9 2q3 2 1 5h9',
    'M6 5h11V3c0-3 5-3 5 0v13q0 4-4 4H7v2c-2 2-5 1-5-2V7c0-3 5-3 5 0v13M17 5h5', 'M1.500 5c8 7 13-4 21 0v14c-8-5-13 6-21 0z', 'M1.500 4c4 6 7-3 10.500 1s7 1 10.500-1v15c-4 5-7-4-10.500 0s-7-2-10.500 0z']],
  ['标注', [
    'M1.500 4.500h20v13H12l-4 5v-5H1.500z', 'M5 4.500h14q3.500 0 3.500 3.500v6q0 3.500-3.500 3.500h-7l-4 5v-5H5q-3.500 0-3.500-3.500V8q0-3.500 3.500-3.500z', 'M8 18l-.500 5 5-4c13 0 13-16 0-16S-3 14 8 18z',
    'M5 5c3-5 8-3 9-1 5-3 7 1 6 4 5 2 2 8-1 8-3 4-7 3-8 2l-3 5-1-5c-5 0-5-4-4-5-3-3-1-8 2-8z',
    'M10 3h12.500v17H10zM1.500 22.500l8.500-11', 'M10 3h12.500v17H10zM1.500 22.500L5 11.500h5', 'M10 2h12.500v17H10zM7 22.500l-5-5V9h8',
    solid(13, 3, 10, 18) + p('M10 3v18M1.500 22.500L10 11'), solid(13, 3, 10, 18) + p('M10 3v18M1.500 22.500L5 11h5'), solid(13, 2, 10, 18) + p('M10 2v18M8 22.500l-6-6V11h8'),
    solid(9, 3, 14, 18) + p('M1.500 22.500L10 11'), solid(9, 3, 14, 18) + p('M1.500 22.500L5 12h5'), solid(9, 2, 14, 18) + p('M8 22.500l-6-6V10h8'),
    tint(14, 3, 8.5, 17) + p('M10 3v18M1.500 22.500L10 11'), tint(14, 3, 8.5, 17) + p('M10 3v18M1.500 22.500L5 11h5'), tint(14, 2, 8.5, 17) + p('M10 2v18M8 22.500l-6-6V11h8')]],
  ['动作按钮', [
    bevel + 'M14 8v8l-5-4z', bevel + 'M10 8v8l5-4z', bevel + 'M16 8v8l-5-4zM8.500 8v8', bevel + 'M8 8v8l5-4zM15.500 8v8',
    frame + 'M7 17v-6l5-4.500 5 4.500v6zM11.500 14h1', p(frame) + p('M9.500 10.500H12V17M9 17.500h6M11 7h2', 'stroke-width="2"'), frame + 'M15 16c0 3-8 3-8 0v-2h3v1q2 1 2-1V9h-2l3-3.500L17 9h-2z',
    frame + 'M6 8h8v8H6zM14 11l4-3v8l-4-3M9 11h2', frame + 'M7 7h6l4 4v6H7zM13 7v4h4', frame + 'M5 10h3l5-4v12l-5-4H5zM15 12h4M15 9l3-2M15 15l3 2', p(frame) + p('M9 9c0-4 6-3 6 0s-3 2-3 5M12 16v2', 'stroke-width="2"'), bevel]]
];

document.querySelector('.gallery-body').innerHTML = sections.map(([title, shapes]) =>
  `<h3>${title}</h3><div class="shapes">` + shapes.map(s => {
    const hot = s === c(10.5) && title === '基本形状';
    return `<button${hot ? ' class="hot"' : ''}><svg viewBox="0 0 24 24">${s[0] === '<' ? s : p(s)}</svg></button>`;
  }).join('') + '</div>').join('');
```
